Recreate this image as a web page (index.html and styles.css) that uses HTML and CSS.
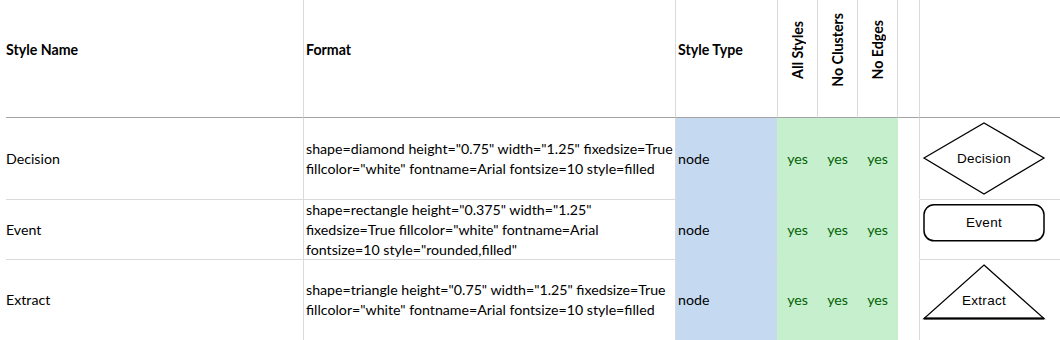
FILE: index.html
```html
<!DOCTYPE html>
<html>
<head>
<meta charset="utf-8">
<link rel="stylesheet" href="styles.css">
</head>
<body>
<div class="sheet">
  <div class="cell head"><span>Style Name</span></div>
  <div class="cell head pad"><span>Format</span></div>
  <div class="cell head pad"><span>Style Type</span></div>
  <div class="cell head rot"><span>All Styles</span></div>
  <div class="cell head rot"><span>No Clusters</span></div>
  <div class="cell head rot"><span>No Edges</span></div>
  <div class="cell head"></div>
  <div class="cell head last"></div>

  <div class="cell name">Decision</div>
  <div class="cell fmt">shape=diamond height="0.75" width="1.25" fixedsize=True<br>fillcolor="white" fontname=Arial fontsize=10 style=filled</div>
  <div class="cell type">node</div>
  <div class="cell yes">yes</div>
  <div class="cell yes">yes</div>
  <div class="cell yes yes-last">yes</div>
  <div class="cell gap"></div>
  <div class="cell shape">
    <svg width="125" height="76" viewBox="0 0 125 76">
      <polygon points="1,36 61,1 121,36 61,72" fill="#fff" stroke="#000" stroke-width="1.3"/>
      <text x="61" y="40.5" text-anchor="middle" class="lbl">Decision</text>
    </svg>
  </div>

  <div class="cell name">Event</div>
  <div class="cell fmt">shape=rectangle height="0.375" width="1.25"<br>fixedsize=True fillcolor="white" fontname=Arial<br>fontsize=10 style="rounded,filled"</div>
  <div class="cell type">node</div>
  <div class="cell yes">yes</div>
  <div class="cell yes">yes</div>
  <div class="cell yes yes-last">yes</div>
  <div class="cell gap"></div>
  <div class="cell shape">
    <svg width="125" height="40" viewBox="0 0 125 40">
      <rect x="1" y="0.8" width="120" height="36" rx="10" ry="10" fill="#fff" stroke="#000" stroke-width="1.5"/>
      <text x="61" y="23" text-anchor="middle" class="lbl">Event</text>
    </svg>
  </div>

  <div class="cell name">Extract</div>
  <div class="cell fmt">shape=triangle height="0.75" width="1.25" fixedsize=True<br>fillcolor="white" fontname=Arial fontsize=10 style=filled</div>
  <div class="cell type">node</div>
  <div class="cell yes">yes</div>
  <div class="cell yes">yes</div>
  <div class="cell yes yes-last">yes</div>
  <div class="cell gap"></div>
  <div class="cell shape">
    <svg width="125" height="58" viewBox="0 0 125 58">
      <polygon points="61,1 121,54.5 1,54.5" fill="#fff" stroke="#000" stroke-width="1.3" stroke-linejoin="miter"/>
      <line x1="1" y1="54.5" x2="121" y2="54.5" stroke="#000" stroke-width="2"/>
      <text x="61" y="41" text-anchor="middle" class="lbl">Extract</text>
    </svg>
  </div>
</div>
</body>
</html>
```
FILE: styles.css
```css
* { box-sizing: border-box; }
html, body { margin: 0; padding: 0; background: #fff; }
body {
  font-family: Lato, "Open Sans", "Liberation Sans", sans-serif;
  font-size: 14.2px;
  color: #000;
  overflow: hidden;
}
.sheet {
  margin-left: 6px;
  display: grid;
  grid-template-columns: 298px 372px 102px 40px 40px 40px 22px 1fr;
  grid-template-rows: 118px 82px 60px 81px;
}
.cell {
  border-right: 1px solid #dadada;
  border-bottom: 1px solid #dadada;
  display: flex;
  align-items: center;
  line-height: 20px;
  white-space: nowrap;
}
.head {
  font-weight: bold;
  border-bottom-color: #a3a3a3;
  padding-bottom: 17px;
}
.head.pad { padding-left: 2px; }
.head.last { border-right: none; }
.rot { justify-content: center; }
.rot span {
  writing-mode: vertical-rl;
  transform: rotate(180deg);
  line-height: 18px;
}
.name { padding-left: 0; }
.fmt { padding-left: 2px; }
.type {
  padding-left: 2px;
  background: #c5d9f1;
  border-right-color: #c6efce;
  border-bottom-color: #c5d9f1;
}
.yes {
  justify-content: center;
  color: #006100;
  background: #c6efce;
  border-right-color: #c6efce;
  border-bottom-color: #c6efce;
}
.gap { border-bottom-color: #fff; }
.shape {
  align-items: flex-start;
  padding: 4px 0 0 3px;
  border-right: none;
}
.shape svg { display: block; overflow: visible; }
.lbl {
  font-family: "Liberation Sans", Arial, sans-serif;
  font-size: 13.5px;
  letter-spacing: 0.3px;
  fill: #000;
}
```
